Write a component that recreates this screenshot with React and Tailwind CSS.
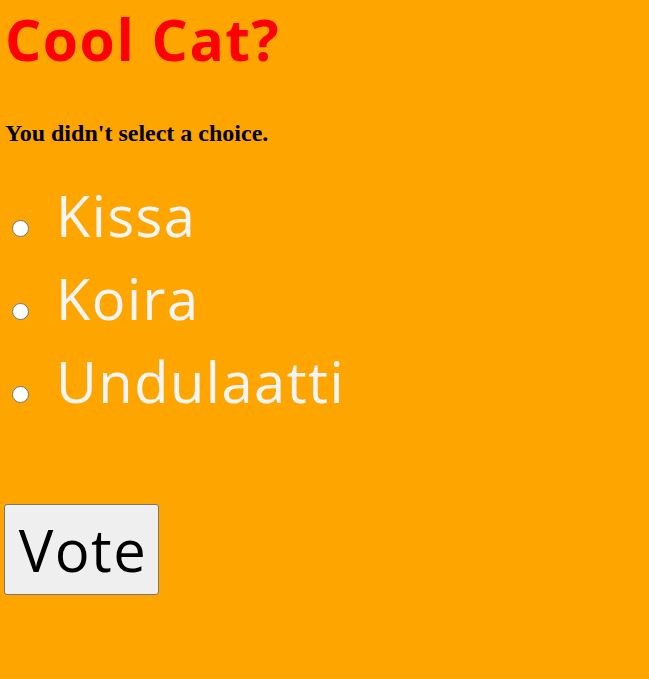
import { useState } from 'react';

const CHOICES = ['Kissa', 'Koira', 'Undulaatti'];

export default function App() {
  const [choice, setChoice] = useState(null);

  return (
    <div className="min-h-screen w-full bg-[#ffa500] pl-[5px] pt-px">
      <h1 className="m-0 text-[57px] leading-[76px] tracking-[1.5px] font-bold text-[#ff0000] font-['Open_Sans',sans-serif]">
        Cool Cat?
      </h1>

      <p className="mt-[42px] text-[24px] leading-[28px] font-bold text-black font-['Liberation_Serif',serif]">
        You didn't select a choice.
      </p>

      <div className="mt-[27px] flex flex-col">
        {CHOICES.map((c) => (
          <label key={c} className="flex items-baseline h-[83px] cursor-pointer">
            <input
              type="radio"
              name="pet"
              checked={choice === c}
              onChange={() => setChoice(c)}
              className="appearance-none ml-[7px] w-[17px] h-[17px] rounded-full border border-[#767676] bg-white shrink-0"
            />
            <span className="ml-[27px] text-[56px] leading-[83px] tracking-[1.5px] text-[#f5f5f5] font-['Open_Sans',sans-serif]">
              {c}
            </span>
          </label>
        ))}
      </div>

      <button className="mt-[81px] -ml-px w-[155px] h-[91px] pl-[3px] bg-[#efefef] border border-[#767676] rounded-[3px] text-[58px] leading-[80px] tracking-[1.5px] text-black font-['Open_Sans',sans-serif]">
        Vote
      </button>
    </div>
  );
}
